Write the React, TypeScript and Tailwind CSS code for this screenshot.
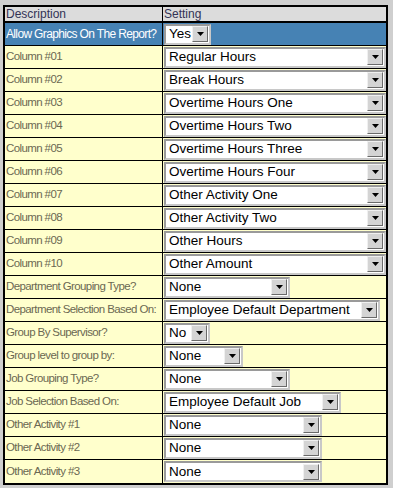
import React from "react";

type Row = { label: string; value: string; width: number; selected?: boolean };

const rows: Row[] = [
  { label: "Allow Graphics On The Report?", value: "Yes", width: 47, selected: true },
  { label: "Column #01", value: "Regular Hours", width: 222 },
  { label: "Column #02", value: "Break Hours", width: 222 },
  { label: "Column #03", value: "Overtime Hours One", width: 222 },
  { label: "Column #04", value: "Overtime Hours Two", width: 222 },
  { label: "Column #05", value: "Overtime Hours Three", width: 222 },
  { label: "Column #06", value: "Overtime Hours Four", width: 222 },
  { label: "Column #07", value: "Other Activity One", width: 222 },
  { label: "Column #08", value: "Other Activity Two", width: 222 },
  { label: "Column #09", value: "Other Hours", width: 222 },
  { label: "Column #10", value: "Other Amount", width: 222 },
  { label: "Department Grouping Type?", value: "None", width: 126 },
  { label: "Department Selection Based On:", value: "Employee Default Department", width: 216 },
  { label: "Group By Supervisor?", value: "No", width: 46 },
  { label: "Group level to group by:", value: "None", width: 79 },
  { label: "Job Grouping Type?", value: "None", width: 126 },
  { label: "Job Selection Based On:", value: "Employee Default Job", width: 177 },
  { label: "Other Activity #1", value: "None", width: 158 },
  { label: "Other Activity #2", value: "None", width: 158 },
  { label: "Other Activity #3", value: "None", width: 158 },
];

function FakeSelect({ value, width }: { value: string; width: number }) {
  return (
    <div
      className="flex items-center h-[21px] bg-white border-2 border-t-[#9a9a9a] border-l-[#9a9a9a] border-b-[#c8c8c8] border-r-[#c8c8c8] pl-[3px] pr-px"
      style={{ width }}
    >
      <span className="flex-1 truncate text-[13.5px] leading-none text-black font-['Liberation_Sans',Arial,sans-serif]">{value}</span>
      <div className="flex items-center justify-center w-[16px] h-[16px] bg-[#d4d4d4] border border-t-[#f0f0f0] border-l-[#f0f0f0] border-b-[#6a6a6a] border-r-[#6a6a6a]">
        <svg width="7" height="4" viewBox="0 0 7 4">
          <path d="M0 0h7L3.5 4z" fill="#000" />
        </svg>
      </div>
    </div>
  );
}

export default function App() {
  return (
    <div className="w-[393px] h-[488px] bg-[#cfcfcf] pt-[5px] pl-[3px] font-['Liberation_Sans',Arial,sans-serif]">
      <div className="w-[385px] border-2 border-black bg-[#ffffcc]">
        <div className="flex h-[16px] bg-[#dcdcdc] border-b-2 border-black text-[12px] leading-[14px] text-[#333355]">
          <div className="w-[158px] pl-[1px] border-r border-black">Description</div>
          <div className="flex-1 pl-[1px]">Setting</div>
        </div>
        {rows.map((r, i) => (
          <div
            key={i}
            className={`flex h-[23px] ${i < rows.length - 1 ? "border-b border-black" : ""} ${r.selected ? "bg-[#4682b4]" : "bg-[#ffffcc]"}`}
          >
            <div
              className={`w-[158px] pl-[1px] flex items-center border-r border-black whitespace-nowrap overflow-hidden ${r.selected ? "text-white text-[12px] tracking-[-0.65px]" : "text-[#6b6852] text-[11.5px] tracking-[-0.6px]"}`}
            >
              {r.label}
            </div>
            <div className="flex-1 flex items-center pl-[1px]">
              <FakeSelect value={r.value} width={r.width} />
            </div>
          </div>
        ))}
      </div>
    </div>
  );
}
